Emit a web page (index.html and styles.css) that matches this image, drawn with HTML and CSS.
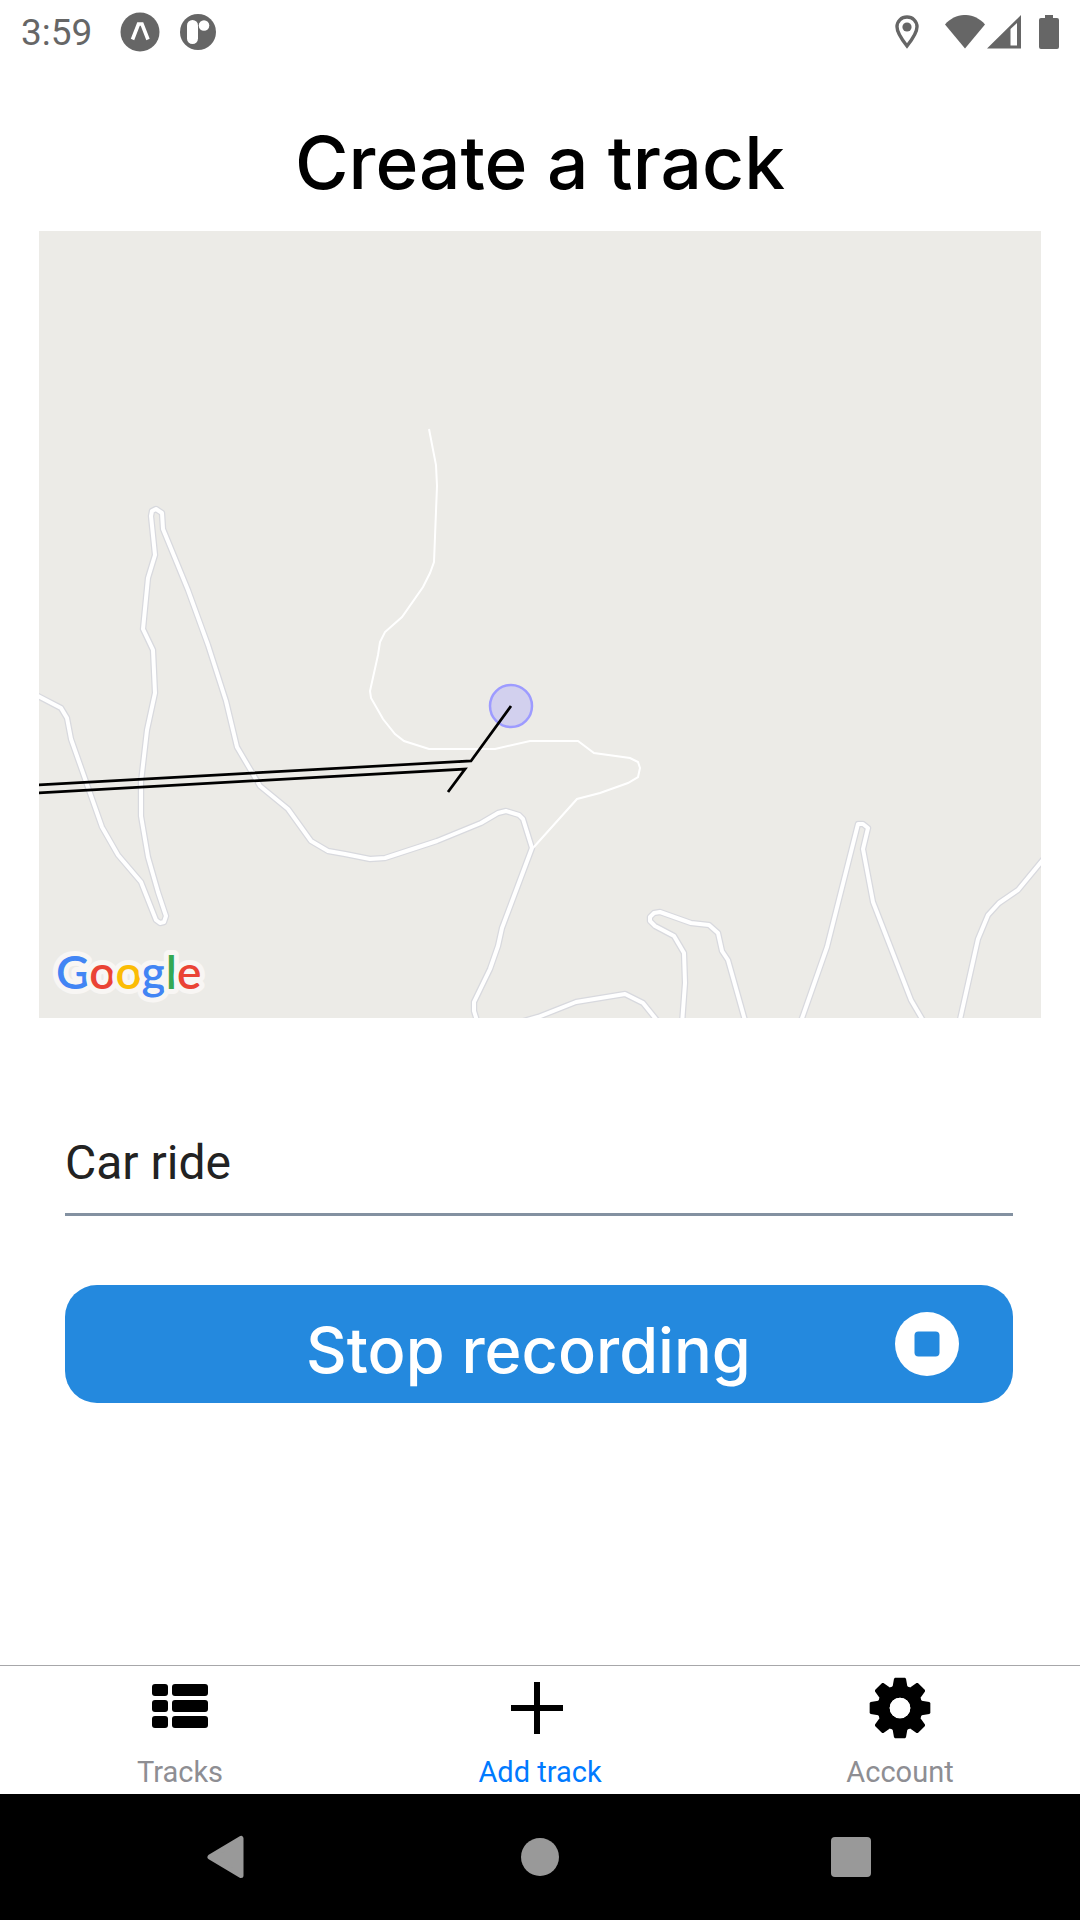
FILE: index.html
```html
<!DOCTYPE html>
<html lang="en">
<head>
<meta charset="utf-8">
<meta name="viewport" content="width=device-width, initial-scale=1">
<title>Create a track</title>
<link rel="stylesheet" href="styles.css">
</head>
<body>
<div class="app">
  <div class="status-bar">
    <div class="status-left">
      <span class="clock">3:59</span>
      <svg width="40" height="40" viewBox="0 0 40 40" aria-hidden="true"><circle cx="20" cy="20" r="19.5" fill="#666"/><path d="M12.5 27.500 18.500 12h3.500L28 27.500" fill="none" stroke="#fff" stroke-width="3.600"/></svg>
      <svg width="36" height="40" viewBox="0 0 36 40" aria-hidden="true"><circle cx="18" cy="20" r="18" fill="#666"/><rect x="7" y="8" width="11" height="24" rx="5.5" fill="#fff"/><circle cx="24" cy="13.500" r="5.300" fill="#fff"/></svg>
    </div>
    <div class="status-right">
      <svg class="pin" width="24" height="34" viewBox="0 0 24 34" aria-hidden="true"><path d="M12 2C6.300 2 2 6.300 2 11.800 2 18.500 12 31 12 31s10-12.500 10-19.200C22 6.300 17.700 2 12 2z" fill="none" stroke="#666" stroke-width="3.400"/><circle cx="12" cy="12" r="4.600" fill="#666"/></svg>
      <svg width="40" height="34" viewBox="0 0 40 34" aria-hidden="true"><path d="M0 9.500C11-3.200 29-3.200 40 9.500L20 33.500z" fill="#666"/></svg>
      <svg width="34" height="34" viewBox="0 0 34 34" aria-hidden="true"><path fill-rule="evenodd" d="M34 0v33.500H0zM23.500 14v16.500H30V8z" fill="#666"/></svg>
      <svg class="battery" width="20" height="34" viewBox="0 0 20 34" aria-hidden="true"><path d="M6 0h8v3h4a2 2 0 0 1 2 2v27a2 2 0 0 1-2 2H2a2 2 0 0 1-2-2V5a2 2 0 0 1 2-2h4z" fill="#666"/></svg>
    </div>
  </div>

  <main class="screen">
    <h1 class="title">Create a track</h1>

    <svg class="map" viewBox="39 231 1002 787" role="img" aria-label="Map">
      <defs>
        <g id="roads" fill="none" stroke-linejoin="round">
          <path d="M36 695 61 708 67 718 71 739 102 827 118 855 141 882 156 920 160 923 164 922 166 916 158 892 148 857 141 816 141 782 147 730 155 693 153 650 143 629 148 578 155 555 151 516 152 511 156 509 162 513 163 529 188 590 208 645 226 701 237 747 260 786 288 809 311 841 328 851 345 854 370 859 385 858 437 841 481 823 498 813 506 811 519 815 523 819 532 848 502 928 498 946 490 969 474 1002 474 1011 478 1024"/>
          <path d="M520 1022 538 1017 576 1002 625 994 643 1003 660 1024"/>
          <path d="M682 1024 685 983 684 953 674 936 655 926 650 921 650 917 654 913 660 912 691 923 709 925 718 933 722 951 728 960 746 1024"/>
          <path d="M800 1024 827 947 858 824 863 824 868 828 863 849 873 902 911 1000 925 1024"/>
          <path d="M959 1024 978 939 988 915 999 903 1018 890 1046 856"/>
        </g>
      </defs>
      <use href="#roads" stroke="#d8d9de" stroke-width="6.500"/>
      <path d="M429 429 436 465 437 486 434 562 430 573 423 587 402 617 385 632 380 642 378 655 370 691 371 698 383 719 395 734 404 741 429 749 495 749 530 741 578 741 594 753 630 758 638 762 640 768 638 777 628 783 600 793 577 799 533 848" fill="none" stroke="#fff" stroke-width="2"/>
      <use href="#roads" stroke="#fff" stroke-width="4"/>
      <circle cx="511" cy="706" r="21" fill="#d2d0ee" stroke="#9d9bff" stroke-width="2.500"/>
      <path d="M36 785 471 761 511 706M36 793 465 769 448 792" fill="none" stroke="#000" stroke-width="2.800"/>
      <text class="map-brand" x="56" y="989"><tspan fill="#4285f4">G</tspan><tspan fill="#ea4335">o</tspan><tspan fill="#fbbc05">o</tspan><tspan fill="#4285f4">g</tspan><tspan fill="#34a853">l</tspan><tspan fill="#ea4335">e</tspan></text>
    </svg>

    <form class="track-form">
      <input class="track-name" type="text" value="Car ride" aria-label="Track name">
      <button class="record" type="button">
        <span class="record-label">Stop recording</span>
        <svg width="64" height="64" viewBox="0 0 64 64" aria-hidden="true"><circle cx="32" cy="32" r="32" fill="#fff"/><rect x="19.500" y="19.500" width="25" height="25" rx="4" fill="#2489de"/></svg>
      </button>
    </form>
  </main>

  <nav class="tabs">
    <a class="tab" href="#tracks">
      <svg width="62" height="62" viewBox="0 0 62 62" aria-hidden="true"><rect x="3" y="7" width="16" height="12" rx="3"/><rect x="23" y="7" width="36" height="12" rx="3"/><rect x="3" y="23" width="16" height="12" rx="3"/><rect x="23" y="23" width="36" height="12" rx="3"/><rect x="3" y="39" width="16" height="12" rx="3"/><rect x="23" y="39" width="36" height="12" rx="3"/></svg>
      <span>Tracks</span>
    </a>
    <a class="tab tab-active" href="#add">
      <svg width="62" height="62" viewBox="0 0 62 62" aria-hidden="true"><path d="M28 5v52M2 31h52" stroke="#000" stroke-width="6"/></svg>
      <span>Add track</span>
    </a>
    <a class="tab" href="#account">
      <svg width="62" height="62" viewBox="-93 -93 186 186" aria-hidden="true">
        <defs><path id="tooth" d="M-15-91h30l3 3 4 23 14 8-8 20h-56l-8-20 14-8 4-23z"/></defs>
        <use href="#tooth"/><use href="#tooth" transform="rotate(45)"/><use href="#tooth" transform="rotate(90)"/><use href="#tooth" transform="rotate(135)"/><use href="#tooth" transform="rotate(180)"/><use href="#tooth" transform="rotate(225)"/><use href="#tooth" transform="rotate(270)"/><use href="#tooth" transform="rotate(315)"/>
        <circle r="47" fill="none" stroke="#000" stroke-width="32"/><circle r="31" fill="#fff"/>
      </svg>
      <span>Account</span>
    </a>
  </nav>

  <div class="system-nav">
    <button type="button" aria-label="Back"><svg width="44" height="44" viewBox="0 0 44 44"><path d="M5 22 36 3.500v37z" fill="#999" stroke="#999" stroke-width="5" stroke-linejoin="round"/></svg></button>
    <button type="button" aria-label="Home"><svg width="44" height="44" viewBox="0 0 44 44"><circle cx="22" cy="22" r="19" fill="#999"/></svg></button>
    <button type="button" aria-label="Recent apps"><svg width="44" height="44" viewBox="0 0 44 44"><rect x="0" y="2" width="40" height="40" rx="4" fill="#999"/></svg></button>
  </div>
</div>
</body>
</html>
```
FILE: styles.css
```css
* {
  box-sizing: border-box;
}

body {
  margin: 0;
  background: #fff;
  font-family: Roboto, sans-serif;
}

svg {
  display: block;
  flex: none;
}

.app {
  display: flex;
  flex-direction: column;
  min-height: 100vh;
}

.status-bar {
  display: flex;
  justify-content: space-between;
  align-items: center;
  height: 63px;
  padding: 0 21px;
  color: #666;
}

.status-left,
.status-right {
  display: flex;
  align-items: center;
}

.status-left {
  gap: 20px;
}

.clock {
  margin-right: 8px;
  padding-top: 3px;
  font-size: 37px;
  line-height: 40px;
}

.pin {
  margin-right: 24px;
}

.status-right {
  gap: 2px;
}

.battery {
  margin-left: 16px;
}

.screen {
  flex: 1;
  padding: 52px 39px 0;
}

.title {
  margin: 0 0 20px;
  color: #000;
  font: 500 73px/96px Inter, sans-serif;
  text-align: center;
}

.map {
  width: 100%;
  background: #ecebe7;
}

.map-brand {
  font: 600 46px Lato, sans-serif;
  stroke: #f8f6f4;
  stroke-width: 10px;
  stroke-linejoin: round;
  paint-order: stroke;
}

.track-form {
  display: flex;
  flex-direction: column;
  gap: 69px;
  padding: 90px 28px 0 26px;
}

.track-name {
  width: 100%;
  height: 108px;
  padding: 4px 0 0;
  border: 0;
  border-bottom: 3px solid #8391a1;
  background: none;
  color: #222;
  font: 48px/60px Roboto, sans-serif;
}

.record {
  display: flex;
  align-items: center;
  width: 100%;
  height: 118px;
  padding: 0 54px 0 97px;
  border: 0;
  border-radius: 32px;
  background: #2489de;
  color: #fff;
  font: 500 63px/80px Inter, sans-serif;
}

.record-label {
  flex: 1;
  padding-top: 12px;
}

.tabs {
  display: flex;
  height: 129px;
  border-top: 1px solid #a7a7aa;
}

.tab {
  display: flex;
  flex: 1;
  flex-direction: column;
  align-items: center;
  gap: 15px;
  padding-top: 11px;
  color: #8e8e93;
  font-size: 29px;
  line-height: 36px;
  text-decoration: none;
}

.tab-active {
  color: #007aff;
}

.system-nav {
  display: flex;
  align-items: center;
  justify-content: space-between;
  height: 126px;
  padding: 0 19%;
  background: #000;
}

.system-nav button {
  padding: 0;
  border: 0;
  background: none;
}
```
